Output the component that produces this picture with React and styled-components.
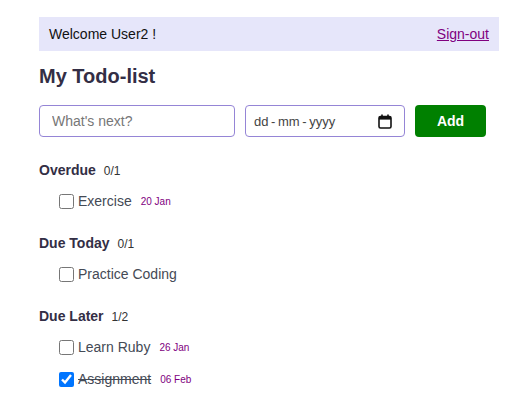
import React from "react"
import styled, { createGlobalStyle } from "styled-components"

const GlobalStyle = createGlobalStyle`
    body {
        margin: 0;
        background: #fff;
        font-family: "Liberation Sans", Arial, sans-serif;
    }
`

const sections = [
    { name: "Overdue", count: "0/1", todos: [{ text: "Exercise", date: "20 Jan", done: false }] },
    { name: "Due Today", count: "0/1", todos: [{ text: "Practice Coding", date: "", done: false }] },
    {
        name: "Due Later",
        count: "1/2",
        todos: [
            { text: "Learn Ruby", date: "26 Jan", done: false },
            { text: "Assignment", date: "06 Feb", done: true },
        ],
    },
]

const CalendarIcon = () => (
    <svg width="14" height="15" viewBox="0 0 14 15">
        <rect x="1" y="2.5" width="12" height="11.5" rx="1.5" fill="none" stroke="#111" strokeWidth="1.6" />
        <rect x="1" y="3" width="12" height="2.6" fill="#111" />
        <rect x="3.2" y="0.5" width="1.6" height="3" fill="#111" />
        <rect x="9.2" y="0.5" width="1.6" height="3" fill="#111" />
    </svg>
)

const App = () => {
    return (
        <>
            <GlobalStyle />
            <Page>
                <Header>
                    <Welcome>Welcome User2 !</Welcome>
                    <SignOut href="#">Sign-out</SignOut>
                </Header>
                <Title>My Todo-list</Title>
                <Form onSubmit={(e) => e.preventDefault()}>
                    <TextInput placeholder="What's next?" />
                    <DateField>
                        <DateText placeholder={"dd\u2009-\u2009mm\u2009-\u2009yyyy"} />
                        <CalendarIcon />
                    </DateField>
                    <AddButton type="submit">Add</AddButton>
                </Form>
                <Sections>
                    {sections.map((s) => (
                        <Section key={s.name}>
                            <SectionTitle>
                                {s.name}
                                <Count>{s.count}</Count>
                            </SectionTitle>
                            <TodoList>
                                {s.todos.map((t) => (
                                    <TodoItem key={t.text}>
                                        <Check type="checkbox" defaultChecked={t.done} />
                                        <TodoText $done={t.done}>{t.text}</TodoText>
                                        {t.date && <DueDate>{t.date}</DueDate>}
                                    </TodoItem>
                                ))}
                            </TodoList>
                        </Section>
                    ))}
                </Sections>
            </Page>
        </>
    )
}

const Page = styled.div`
    padding: 17px 33px 0 39px;
    box-sizing: border-box;
`
const Header = styled.div`
    display: flex;
    justify-content: space-between;
    align-items: center;
    height: 34px;
    padding: 0 10px;
    background: lavender;
    font-size: 14px;
`
const Welcome = styled.span`
    color: #111;
`
const SignOut = styled.a`
    color: purple;
    text-decoration: underline;
`
const Title = styled.h2`
    margin: 14px 0 17px;
    font-size: 20px;
    font-weight: 700;
    color: #332e45;
`
const Form = styled.form`
    display: flex;
    align-items: center;
    gap: 10px;
`
const TextInput = styled.input`
    width: 196px;
    height: 32px;
    box-sizing: border-box;
    border: 1px solid #9585d6;
    border-radius: 4px;
    padding: 0 12px;
    font-family: "Liberation Sans", Arial, sans-serif;
    font-size: 14px;
    &::placeholder {
        color: #777;
    }
`
const DateField = styled.label`
    display: flex;
    align-items: center;
    width: 160px;
    height: 32px;
    box-sizing: border-box;
    border: 1px solid #9585d6;
    border-radius: 4px;
    padding: 0 12px 0 8px;
    background: #fff;
`
const DateText = styled.input`
    flex: 1;
    min-width: 0;
    border: none;
    outline: none;
    padding: 0;
    font-family: "Liberation Sans", Arial, sans-serif;
    font-size: 13px;
    &::placeholder {
        color: #444;
    }
`
const AddButton = styled.button`
    width: 71px;
    height: 32px;
    border: none;
    border-radius: 4px;
    background: green;
    color: #fff;
    font-family: "Liberation Sans", Arial, sans-serif;
    font-size: 14px;
    font-weight: 700;
`
const Sections = styled.div`
    display: flex;
    flex-direction: column;
    gap: 24px;
    margin-top: 24px;
`
const Section = styled.div`
    display: flex;
    flex-direction: column;
    gap: 12px;
`
const SectionTitle = styled.div`
    font-size: 14px;
    font-weight: 700;
    color: #332e45;
    line-height: 18px;
`
const Count = styled.span`
    margin-left: 8px;
    font-size: 12px;
    font-weight: 400;
    color: #333;
`
const TodoList = styled.div`
    display: flex;
    flex-direction: column;
    gap: 14px;
    padding-left: 20px;
`
const TodoItem = styled.label`
    display: flex;
    align-items: center;
    height: 18px;
`
const Check = styled.input`
    width: 15px;
    height: 15px;
    margin: 0 4px 0 0;
`
const TodoText = styled.span`
    font-size: 14px;
    color: #444a55;
    text-decoration: ${(p) => (p.$done ? "line-through" : "none")};
`
const DueDate = styled.span`
    margin-left: 9px;
    font-size: 10px;
    color: purple;
`

export default App
